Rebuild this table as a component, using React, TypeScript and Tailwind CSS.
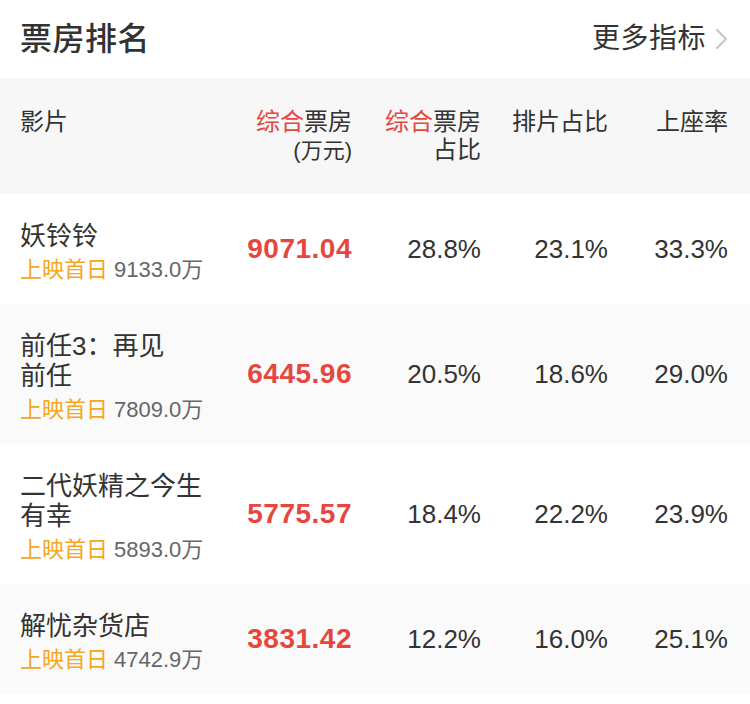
const font = { fontFamily: '"Liberation Sans", "Noto Sans CJK SC", sans-serif' };

interface Film {
  name: string[];
  firstDay: string;
  boxOffice: string;
  share: string;
  schedule: string;
  seat: string;
}

const films: Film[] = [
  { name: ["妖铃铃"], firstDay: "9133.0万", boxOffice: "9071.04", share: "28.8%", schedule: "23.1%", seat: "33.3%" },
  { name: ["前任3：再见", "前任"], firstDay: "7809.0万", boxOffice: "6445.96", share: "20.5%", schedule: "18.6%", seat: "29.0%" },
  { name: ["二代妖精之今生", "有幸"], firstDay: "5893.0万", boxOffice: "5775.57", share: "18.4%", schedule: "22.2%", seat: "23.9%" },
  { name: ["解忧杂货店"], firstDay: "4742.9万", boxOffice: "3831.42", share: "12.2%", schedule: "16.0%", seat: "25.1%" },
];

const cols = "grid grid-cols-[212px_120px_129px_127px_120px] items-center pl-5 pr-[22px]";

export default function App() {
  return (
    <div className="w-[750px] min-h-[704px] bg-white text-[#333]" style={font}>
      <div className="h-[78px] flex items-center justify-between pl-5 pr-[22px]">
        <h1 className="text-[32px] font-medium text-[#333] tracking-[0.5px]">票房排名</h1>
        <div className="flex items-center gap-2">
          <span className="text-[28px] text-[#333] tracking-[0.5px]">更多指标</span>
          <svg width="14" height="22" viewBox="0 0 14 22" fill="none">
            <path d="M3 2l9 9-9 9" stroke="#c8c8c8" strokeWidth="2.2" strokeLinecap="round" strokeLinejoin="round" />
          </svg>
        </div>
      </div>

      <div className={`${cols} h-[116px] bg-[#f7f7f7] text-[24px] leading-[28px] !items-start pt-[30px] text-[#333]`}>
        <div>影片</div>
        <div className="text-right">
          <div><span className="text-[#e5473f]">综合</span>票房</div>
          <div className="text-[22px] mt-[1px]">(万元)</div>
        </div>
        <div className="text-right">
          <div><span className="text-[#e5473f]">综合</span>票房</div>
          <div>占比</div>
        </div>
        <div className="text-right">排片占比</div>
        <div className="text-right">上座率</div>
      </div>

      {films.map((f, i) => (
        <div key={i} className={`${cols} py-[19px] ${i % 2 === 1 ? "bg-[#fafafa]" : "bg-white"}`}>
          <div className="pt-[8px]">
            <div className="text-[26px] leading-[30px] text-[#333]">
              {f.name.map((line, j) => (
                <div key={j}>{line}</div>
              ))}
            </div>
            <div className="mt-[4px] whitespace-nowrap flex items-baseline gap-[6px] leading-[30px]">
              <span className="text-[22px] text-[#f5a623]">上映首日</span>
              <span className="text-[22px] text-[#666]">{f.firstDay}</span>
            </div>
          </div>
          <div className="text-right text-[28px] font-bold text-[#e5473f] tracking-[0.5px]">{f.boxOffice}</div>
          <div className="text-right text-[26px]">{f.share}</div>
          <div className="text-right text-[26px]">{f.schedule}</div>
          <div className="text-right text-[26px]">{f.seat}</div>
        </div>
      ))}
    </div>
  );
}
